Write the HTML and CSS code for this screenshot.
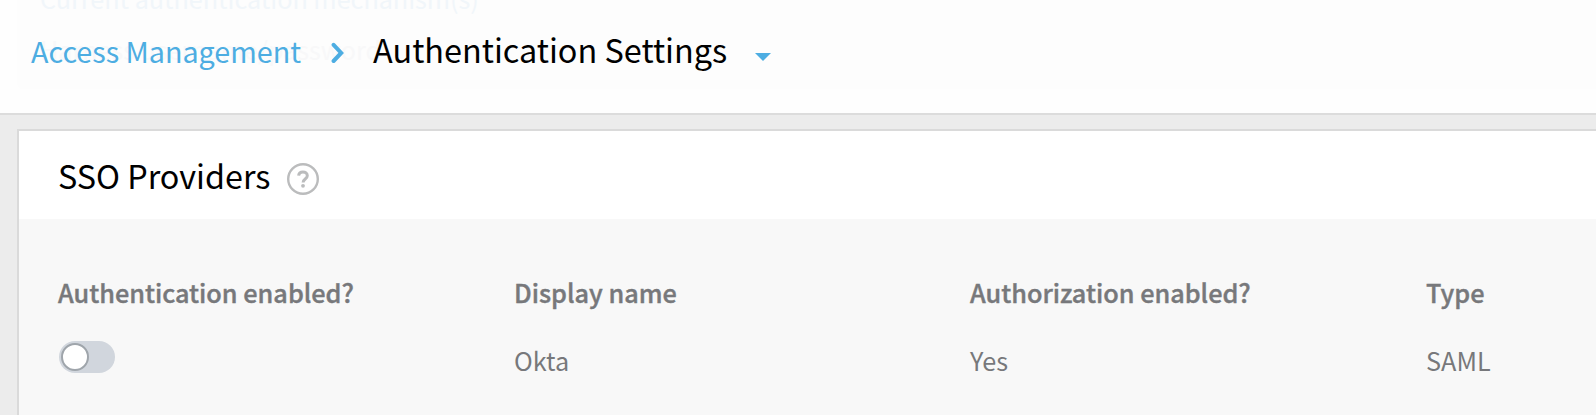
FILE: index.html
```html
<!DOCTYPE html>
<html lang="en">
<head>
<meta charset="utf-8">
<title>Authentication Settings</title>
<link rel="stylesheet" href="styles.css">
</head>
<body>
<header class="header">
  <div class="underlay" aria-hidden="true">
    <div class="underlay-title">Current authentication mechanism(s)</div>
    <div class="underlay-value">Harness username/password</div>
  </div>
  <nav class="breadcrumb">
    <a class="crumb">Access Management</a>
    <svg class="chevron" width="14" height="22" viewBox="0 0 14 22"><path d="M2.6 2.8 10.2 11 2.6 19" fill="none" stroke="#4dade2" stroke-width="4" stroke-linecap="round" stroke-linejoin="miter"/></svg>
    <h1 class="title">Authentication Settings</h1>
    <svg class="caret" width="16" height="8" viewBox="0 0 16 8"><path d="M0 0h16L8 8z" fill="#4dade2"/></svg>
  </nav>
</header>
<main class="card">
  <div class="card-head">
    <h2 class="card-title">SSO Providers</h2>
    <svg class="help" width="32" height="32" viewBox="0 0 32 32" fill="none" stroke="#bbbcbd"><circle cx="16" cy="16" r="14.8" stroke-width="2.4"/><path d="M11.6 12.6c.3-2.4 2-3.6 4.3-3.6 2.5 0 4.4 1.4 4.4 3.7 0 3.4-4.2 3.3-4.2 6.8" stroke-width="3"/><circle cx="16" cy="22.8" r="1.9" fill="#bbbcbd" stroke="none"/></svg>
  </div>
  <div class="grid">
    <div class="th">Authentication enabled?</div>
    <div class="th">Display name</div>
    <div class="th">Authorization enabled?</div>
    <div class="th">Type</div>
    <div class="td"><span class="toggle"><span class="knob"></span></span></div>
    <div class="td">Okta</div>
    <div class="td">Yes</div>
    <div class="td">SAML</div>
  </div>
</main>
</body>
</html>
```
FILE: styles.css
```css
* { box-sizing: border-box; }
body {
  margin: 0;
  height: 415px;
  overflow: hidden;
  background: #ececec;
  font-family: "Noto Sans CJK SC", "Noto Sans", sans-serif;
  color: #000;
}
.header {
  position: relative;
  height: 115px;
  background: #fefefe;
  border-bottom: 2px solid #dcdcdc;
}
.underlay {
  position: absolute;
  inset: 0 0 24px 17px;
  padding-left: 23px;
  overflow: hidden;
  background: #fdfdfd;
  border-radius: 0 0 0 6px;
  font-size: 25.15px;
  line-height: 50px;
  white-space: nowrap;
}
.underlay-title { margin-top: -27px; color: #f1f6fa; }
.underlay-value { padding-top: 1px; color: #f8f8f9; }
.breadcrumb {
  position: relative;
  display: flex;
  align-items: flex-start;
  padding: 30px 0 0 31px;
  line-height: 40px;
  white-space: nowrap;
}
.crumb { padding-top: 1px; font-size: 28.7px; color: #4dade2; width: 270px; }
.chevron { margin: 12px 0 0 30px; }
.title {
  margin: -1px 0 0 28px;
  width: 355px;
  font-size: 32.4px;
  font-weight: 400;
}
.caret { margin: 23px 0 0 27px; }
.card {
  margin: 14px 0 0 17px;
  height: 300px;
  background: #f8f8f8;
  border: solid #dadada;
  border-width: 2px 0 0 2px;
}
.card-head {
  display: flex;
  height: 88px;
  padding-left: 39px;
  background: #fff;
}
.card-title {
  margin: 24px 0 0;
  width: 212px;
  font-size: 32.3px;
  font-weight: 400;
  line-height: 40px;
  white-space: nowrap;
}
.help { margin: 32px 0 0 17px; }
.grid {
  display: grid;
  grid-template-columns: repeat(3, 456px) 1fr;
  grid-template-rows: 40px 40px;
  row-gap: 28px;
  padding: 53px 0 0 39px;
  font-size: 25.25px;
  line-height: 40px;
  color: #77787b;
}
.th { font-weight: 500; -webkit-text-stroke: 0.4px #77787b; }
.toggle {
  display: flex;
  width: 56px;
  height: 32px;
  margin: 1px 0 0 1px;
  padding: 2px;
  border-radius: 16px;
  background: #d1d6dd;
}
.knob {
  width: 28px;
  height: 28px;
  border: 2px solid #9fa5ab;
  border-radius: 50%;
  background: #fff;
}
```
